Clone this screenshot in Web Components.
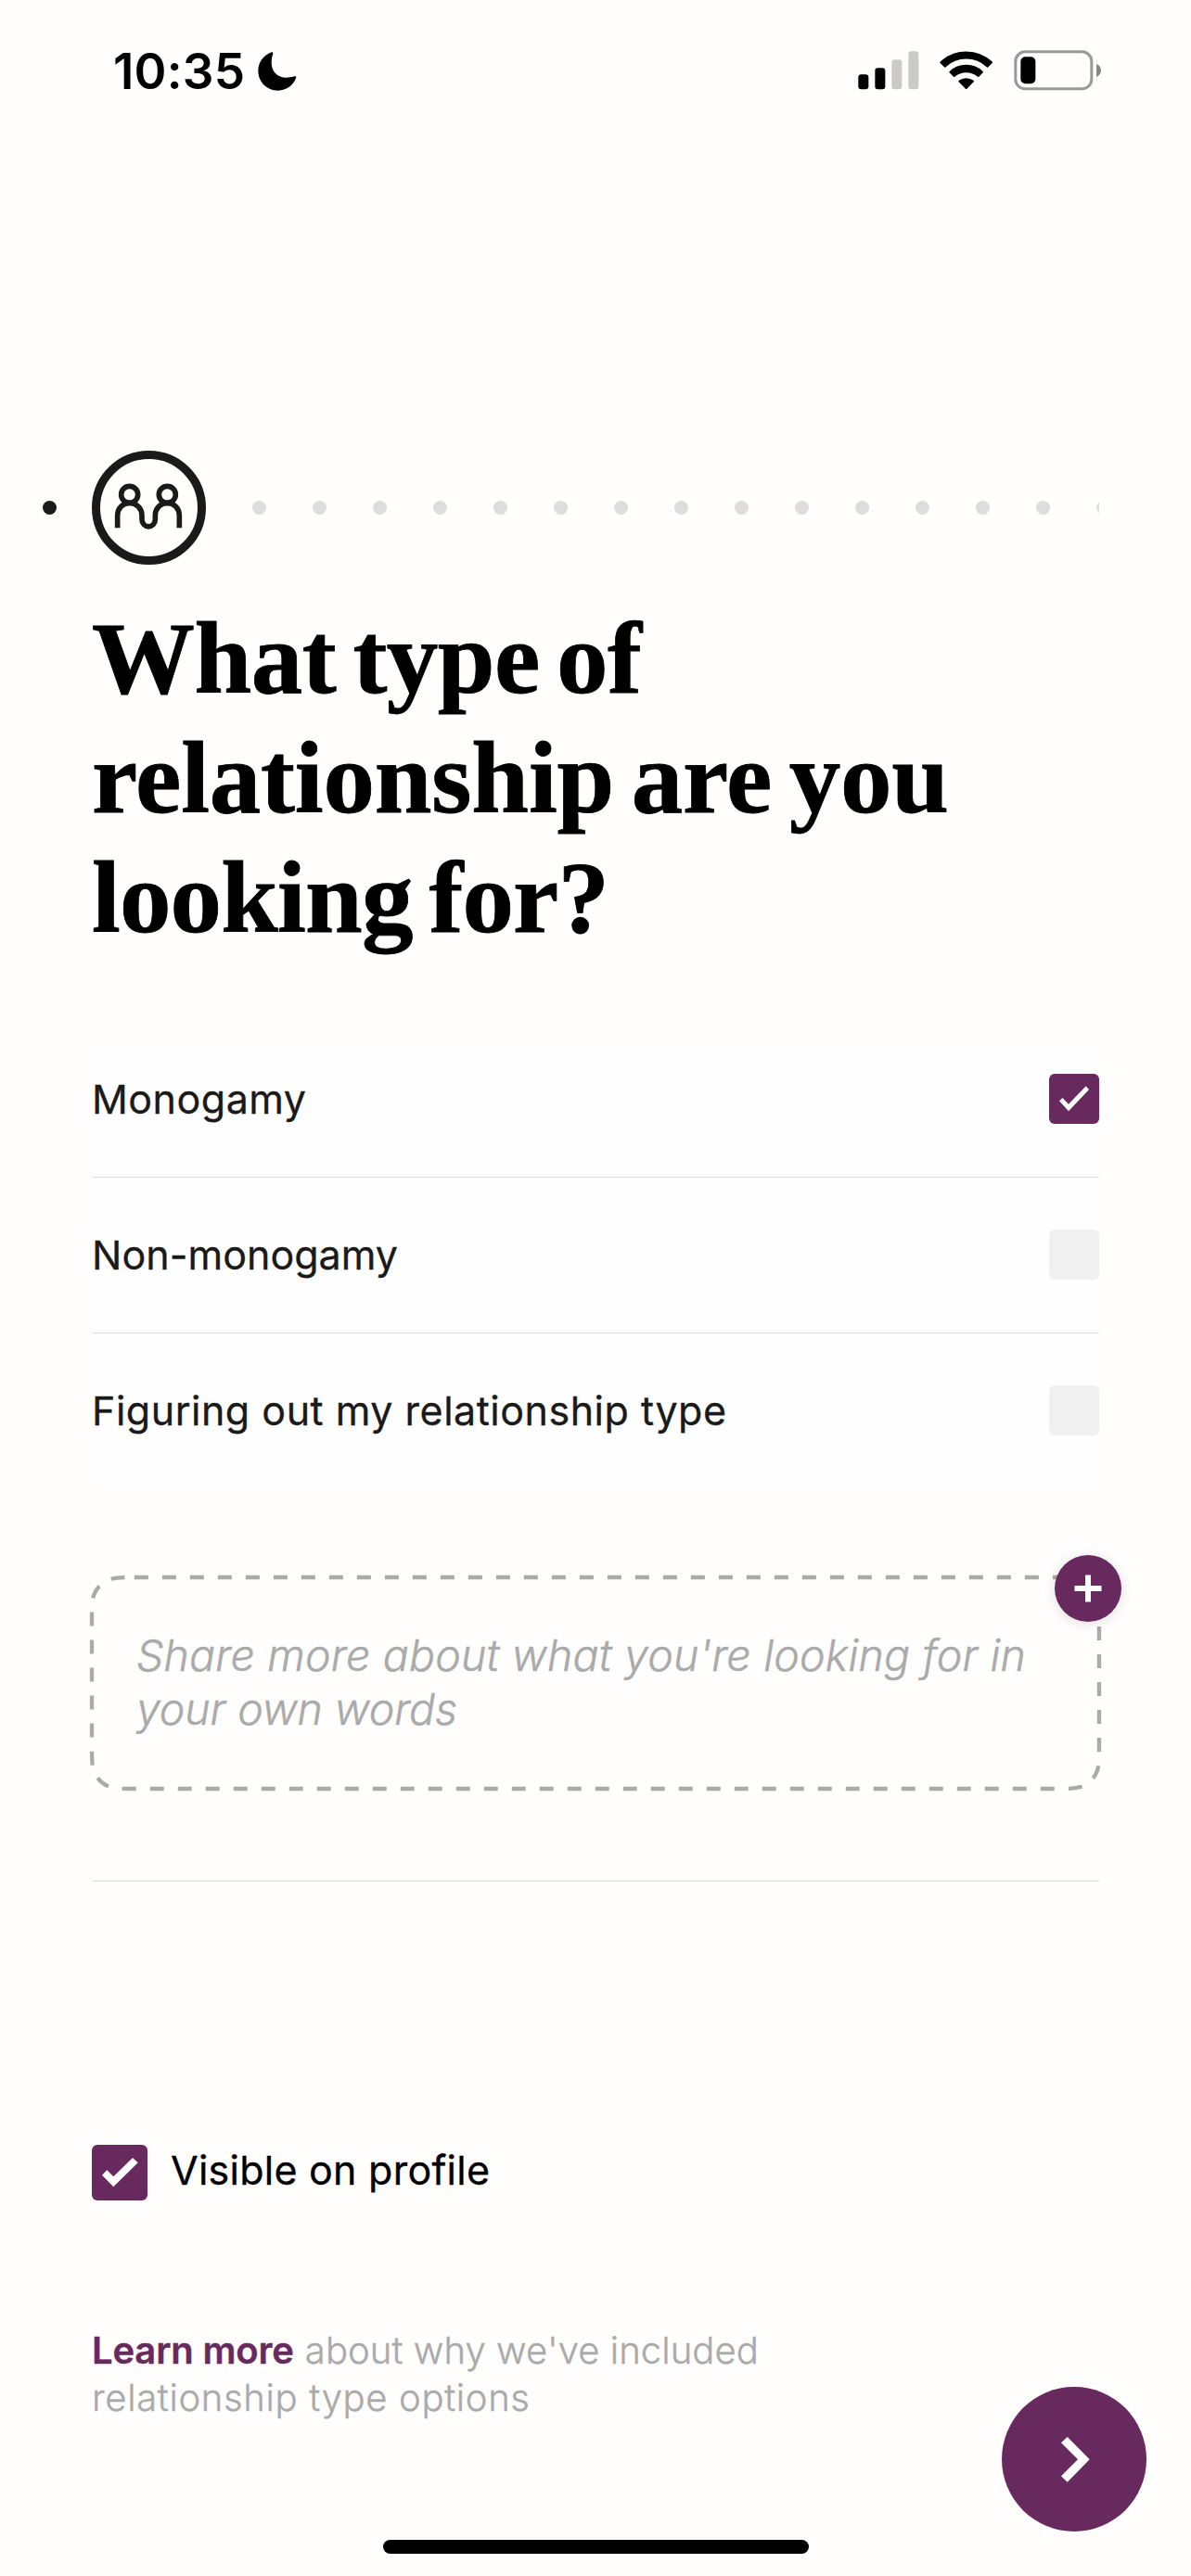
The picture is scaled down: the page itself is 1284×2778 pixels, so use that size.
<!DOCTYPE html>
<html lang="en">
<head>
<meta charset="utf-8">
<title>Relationship type</title>
<style>
html,body{margin:0;padding:0;background:#fffefd}
body{font-family:Inter,"Liberation Sans",sans-serif;color:#1a1a1a}
</style>
</head>
<body>
<app-screen>
  <status-bar slot="status" time="10:35"></status-bar>
  <step-progress remaining="15"></step-progress>
  <question-title>
    <fit-line width="593">What type of</fit-line>
    <fit-line width="924">relationship are you</fit-line>
    <fit-line width="558">looking for?</fit-line>
  </question-title>
  <option-list>
    <option-row checked><fit-line width="231">Monogamy</fit-line></option-row>
    <option-row><fit-line width="330">Non-monogamy</fit-line></option-row>
    <option-row><fit-line width="684">Figuring out my relationship type</fit-line></option-row>
  </option-list>
  <prompt-box>
    <fit-line width="959">Share more about what you're looking for in</fit-line>
    <fit-line width="346">your own words</fit-line>
  </prompt-box>
  <visible-toggle><fit-line width="344">Visible on profile</fit-line></visible-toggle>
  <learn-note>
    <fit-line slot="link" width="218">Learn more</fit-line>
    <fit-line slot="first" width="489">about why we've included</fit-line>
    <fit-line width="472">relationship type options</fit-line>
  </learn-note>
  <next-button slot="overlay"></next-button>
</app-screen>
<script>
const attach = (el, html) => { el.attachShadow({mode:'open'}).innerHTML = html; };

/* Full screen column */
customElements.define('app-screen', class extends HTMLElement {
  constructor(){ super(); attach(this, `
<style>
:host{display:flex;flex-direction:column;position:relative;width:1284px;height:2778px;overflow:hidden;background:#fffefd}
main{display:flex;flex-direction:column;flex:1}
.home{width:459px;height:15px;border-radius:8px;background:#000;align-self:center;margin-bottom:24px}
</style>
<slot name="status"></slot><main><slot></slot></main><div class="home"></div><slot name="overlay"></slot>`); }
});

/* One line of text tracked to a given width */
customElements.define('fit-line', class extends HTMLElement {
  constructor(){ super(); attach(this, `<style>:host{display:block;white-space:nowrap}span{display:inline-block}</style><span><slot></slot></span>`); }
  connectedCallback(){ requestAnimationFrame(() => this.fit()); this.fit(); }
  fit(){
    const s = this.shadowRoot.querySelector('span'), n = this.textContent.length;
    s.style.letterSpacing = '0px';
    const w = s.getBoundingClientRect().width;
    if (w) s.style.letterSpacing = ((+this.getAttribute('width') - w) / (n - 1)).toFixed(3) + 'px';
  }
});

customElements.define('status-bar', class extends HTMLElement {
  connectedCallback(){ attach(this, `
<style>
:host{display:flex;justify-content:space-between;height:439px;padding:47px 95px 0 122px;width:1067px;color:#000}
.left,.right{display:flex;align-items:flex-start}
.time{width:143px;font:600 53px/61px Inter,sans-serif}
.moon{margin:9px 0 0 13px}
.right{margin-top:7px}
svg{display:block}
</style>
<div class="left"><fit-line class="time" width="142">${this.getAttribute('time')}</fit-line>
<svg class="moon" width="42" height="42" viewBox="533 79 126 126"><path d="M577 80C551 90 534 113 534 140C534 176 562 204 598 204C626 204 648 186 656 164Q659 156 651 158C641 161 633 162 625 162C597 162 577 142 577 114C577 103 579 93 582 85Q583 78 577 80Z"/></svg></div>
<div class="right"><svg width="264" height="45" viewBox="74 71 792 135">
<g fill="#000"><rect x="75" y="150" width="33" height="48" rx="9"/><rect x="129" y="129" width="33" height="69" rx="9"/></g>
<g fill="#cbcac9"><rect x="183" y="102" width="33" height="96" rx="9"/><rect x="237" y="75" width="33" height="123" rx="9"/></g>
<g stroke="#000" stroke-width="6" stroke-linejoin="round">
<path d="M342 111A119 119 0 0 1 506 111L493 124A101 101 0 0 0 355 124Z"/>
<path d="M372 142A76 76 0 0 1 476 142L463 155A60 60 0 0 0 385 155Z"/>
<path d="M402 172A37 37 0 0 1 446 172L424 194Z"/></g>
<rect x="583.5" y="76.5" width="246" height="120" rx="31" fill="none" stroke="#999" stroke-width="9"/>
<rect x="600" y="93" width="48" height="87" rx="15"/>
<path d="M845 116Q860 122 860 137Q860 151 845 158Z" fill="#888"/></svg></div>`); }
});

customElements.define('step-progress', class extends HTMLElement {
  connectedCallback(){ attach(this, `
<style>
:host{display:flex;align-items:center;height:123px;padding:0 99px 0 46px}
i{flex:none;width:15px;height:15px;border-radius:50%;background:#ddd}
i.done{background:#1a1a1a}
svg{flex:none;margin:0 50px 0 38px}
.rest{display:flex;gap:50px;overflow:hidden;flex:1}
</style>
<i class="done"></i>
<svg width="123" height="123" viewBox="237 78 369 369" fill="none" stroke="#1a1a1a">
<circle cx="421.5" cy="262.5" r="171" stroke-width="27"/>
<g stroke-width="17"><circle cx="359" cy="220" r="27"/><circle cx="481" cy="220" r="27"/>
<path d="M320 328V287A39 40 0 0 1 359 247A40 40 0 0 1 399 287V301A21.500 22.500 0 0 0 442 301V287A39 40 0 0 1 481 247A39 40 0 0 1 520 287V328"/></g></svg>
<div class="rest">${'<i></i>'.repeat(+this.getAttribute('remaining'))}</div>`); }
});

customElements.define('question-title', class extends HTMLElement {
  constructor(){ super(); attach(this, `
<style>:host{display:block;margin:36px 99px 0;font:700 111px/129px "Liberation Serif",serif;word-spacing:-9px;-webkit-text-stroke:.8px #000;color:#000}</style><slot></slot>`); }
});

const CHECK = {
  small: '11,29.3 14.5,26 21,32.7 39.7,13.3 43,17 21,40.3',
  large: '11,32.7 16.3,27.3 23.3,34.3 44,14 49.7,19.3 23.3,45.3'
};

customElements.define('check-box', class extends HTMLElement {
  static observedAttributes = ['checked'];
  constructor(){ super(); this.attachShadow({mode:'open'}); }
  connectedCallback(){ this.draw(); }
  attributeChangedCallback(){ this.draw(); }
  draw(){
    const big = this.getAttribute('size') === 'large', n = big ? 60 : 54;
    this.shadowRoot.innerHTML = `<style>:host{display:block;flex:none;width:${n}px;height:${n}px;border-radius:6px;background:#f0f0f0}
:host([checked]){background:#68295e}svg{display:block}</style>` +
    (this.hasAttribute('checked') ? `<svg width="${n}" height="${n}"><polygon fill="#fff" points="${CHECK[big?'large':'small']}"/></svg>` : '');
  }
});

customElements.define('option-list', class extends HTMLElement {
  constructor(){ super(); attach(this, `
<style>
:host{display:flex;flex-direction:column;margin:93px 99px 0;background:#fefefe}
::slotted(option-row){padding:56px 0 57px;border-bottom:1px solid #dadada}
::slotted(option-row:first-child){padding-top:33px}
::slotted(option-row:last-child){border-bottom:0}
</style><slot></slot>`); }
});

customElements.define('option-row', class extends HTMLElement {
  connectedCallback(){ attach(this, `
<style>:host{display:flex;justify-content:space-between;font:400 43px/54px Inter,sans-serif;-webkit-text-stroke:.3px;color:#1a1a1a}</style>
<slot></slot><check-box ${this.hasAttribute('checked')?'checked':''}></check-box>`); }
});

/* Outline with continuous corners, dashed clockwise from the top left */
const outline = (x0, y0, x1, y1, r) => {
  const a=1.528665*r,b=1.088493*r,c=.868407*r,d=.631494*r,e=.074911*r,f=.372824*r,g=.16906*r;
  return `M${x0+a} ${y0}L${x1-a} ${y0}C${x1-b} ${y0} ${x1-c} ${y0} ${x1-d} ${y0+e}C${x1-f} ${y0+g} ${x1-g} ${y0+f} ${x1-e} ${y0+d}C${x1} ${y0+c} ${x1} ${y0+b} ${x1} ${y0+a}`+
  `L${x1} ${y1-a}C${x1} ${y1-b} ${x1} ${y1-c} ${x1-e} ${y1-d}C${x1-g} ${y1-f} ${x1-f} ${y1-g} ${x1-d} ${y1-e}C${x1-c} ${y1} ${x1-b} ${y1} ${x1-a} ${y1}`+
  `L${x0+a} ${y1}C${x0+b} ${y1} ${x0+c} ${y1} ${x0+d} ${y1-e}C${x0+f} ${y1-g} ${x0+g} ${y1-f} ${x0+e} ${y1-d}C${x0} ${y1-c} ${x0} ${y1-b} ${x0} ${y1-a}`+
  `L${x0} ${y0+a}C${x0} ${y0+b} ${x0} ${y0+c} ${x0+e} ${y0+d}C${x0+g} ${y0+f} ${x0+f} ${y0+g} ${x0+d} ${y0+e}C${x0+c} ${y0} ${x0+b} ${y0} ${x0+a} ${y0}Z`;
};

customElements.define('prompt-box', class extends HTMLElement {
  constructor(){ super(); attach(this, `
<style>
:host{display:block;margin:96px 99px 0;padding-bottom:99px;border-bottom:1px solid #dadada}
.box{position:relative;height:173px;padding:55px 48px 0;font:italic 300 46.5px/58px Inter,sans-serif;color:#aaa}
::slotted(fit-line){-webkit-text-stroke:.5px}
.edge{position:absolute;left:-4px;top:-4px}
.add{position:absolute;right:-24px;top:-24px;width:72px;height:72px;border-radius:50%;background:#68295e;box-shadow:0 2px 14px rgba(0,0,0,.13)}
svg{display:block}
</style>
<div class="box"><svg class="edge" width="1094" height="236"><path d="${outline(4,4,1090,232,30)}" fill="none" stroke="#aaa" stroke-width="4.300" stroke-dasharray="15 15"/></svg>
<slot></slot>
<div class="add"><svg width="72" height="72"><path d="M21.500 36H50.500M36 21.500V50.500" stroke="#fff" stroke-width="6"/></svg></div></div>`); }
});

customElements.define('visible-toggle', class extends HTMLElement {
  constructor(){ super(); attach(this, `
<style>:host{display:flex;gap:25px;margin:284px 99px 0;font:400 43px/55px Inter,sans-serif;-webkit-text-stroke:.3px;color:#000}</style>
<check-box size="large" checked></check-box><slot></slot>`); }
});

customElements.define('learn-note', class extends HTMLElement {
  constructor(){ super(); attach(this, `
<style>
:host{display:block;margin:136px 99px 0;font:300 40px/51px Inter,sans-serif;-webkit-text-stroke:.4px;color:#aaa}
.row{display:flex;gap:12px}
b{font-weight:600;color:#68295e}
</style><div class="row"><b><slot name="link"></slot></b><slot name="first"></slot></div><slot></slot>`); }
});

customElements.define('next-button', class extends HTMLElement {
  constructor(){ super(); attach(this, `
<style>:host{display:block;position:absolute;right:48px;bottom:48px;width:156px;height:156px;border-radius:50%;background:#68295e}svg{display:block}</style>
<svg width="156" height="156"><polygon fill="#fff" points="64,60.3 70.7,54 94.7,78.3 70.7,102.7 64,96.3 82,78.3"/></svg>`); }
});
</script>
</body>
</html>
